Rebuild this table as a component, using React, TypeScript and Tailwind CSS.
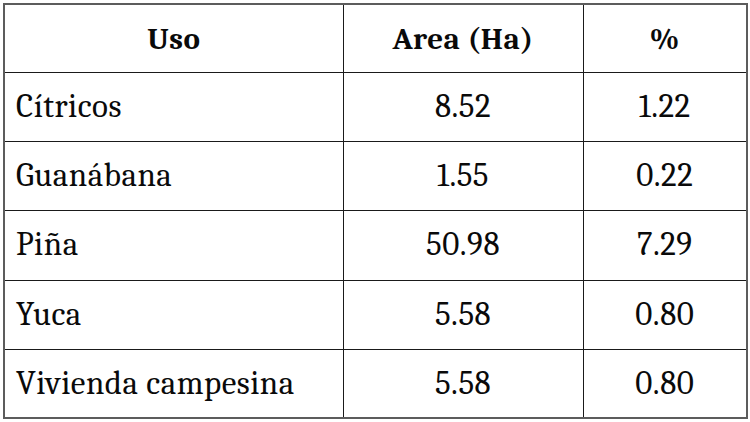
import React from 'react';

const rows = [
  { uso: 'Cítricos', area: '8.52', pct: '1.22', h: 'h-[69px]' },
  { uso: 'Guanábana', area: '1.55', pct: '0.22', h: 'h-[69px]' },
  { uso: 'Piña', area: '50.98', pct: '7.29', h: 'h-[70px]' },
  { uso: 'Yuca', area: '5.58', pct: '0.80', h: 'h-[69px]' },
  { uso: 'Vivienda campesina', area: '5.58', pct: '0.80', h: 'h-[69px]' },
];

const cell = "border border-[#1a1a1a] align-middle font-serif tracking-[0.5px]";

export default function App() {
  return (
    <div className="w-[750px] h-[422px] bg-white pl-[3px] pt-[3px] text-[#0a0a0a]">
      <table className="table-fixed border-collapse w-[743px] border-2 border-[#5c5c5c] font-serif">
        <colgroup>
          <col className="w-[339px]" />
          <col className="w-[240px]" />
          <col className="w-[164px]" />
        </colgroup>
        <thead>
          <tr className="h-[68px] text-[31px] font-bold">
            <th className={`${cell} text-center pt-[2px]`}>Uso</th>
            <th className={`${cell} text-center pt-[2px]`}>Area (Ha)</th>
            <th className={`${cell} text-center pt-[2px]`}>%</th>
          </tr>
        </thead>
        <tbody>
          {rows.map(r => (
            <tr key={r.uso} className={`${r.h} text-[33px]`}>
              <td className={`${cell} pl-[11px]`}>{r.uso}</td>
              <td className={`${cell} text-center`}>{r.area}</td>
              <td className={`${cell} text-center`}>{r.pct}</td>
            </tr>
          ))}
        </tbody>
      </table>
    </div>
  );
}
